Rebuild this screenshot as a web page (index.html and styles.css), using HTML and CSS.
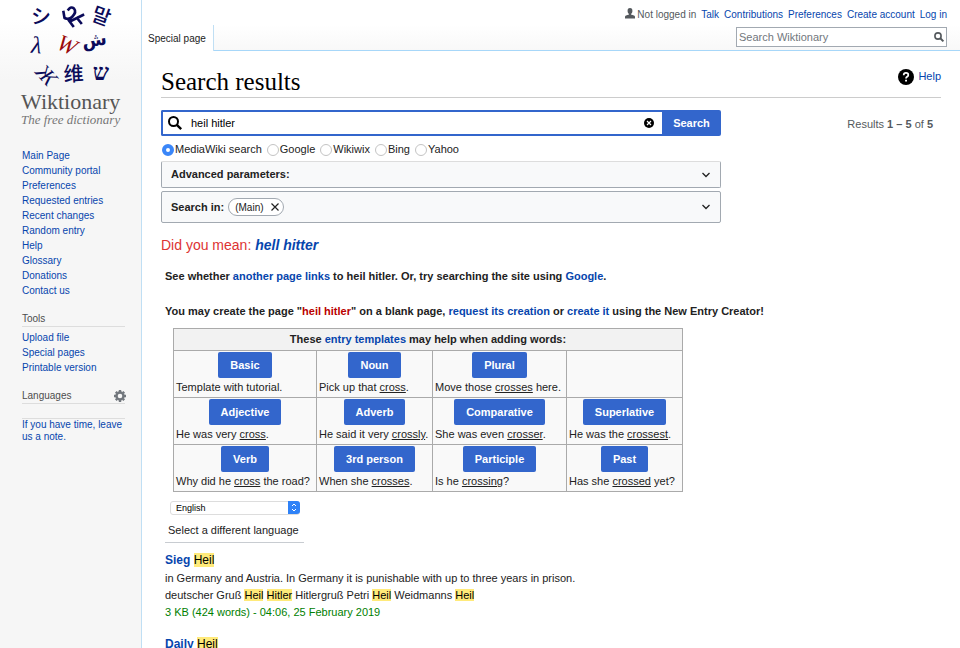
FILE: index.html
```html
<!DOCTYPE html>
<html lang="en">
<head>
<meta charset="utf-8">
<title>Search results - Wiktionary</title>
<link rel="stylesheet" href="styles.css">
</head>
<body>
<aside class="sidebar">
  <a class="logo" href="#" aria-label="Wiktionary">
    <svg viewBox="0 0 100 90" width="100" height="90" aria-hidden="true">
      <g fill="#0b0b5a" text-anchor="middle">
        <text class="cjk-jp" font-size="20" font-weight="500" transform="translate(20 23)">シ</text>
        <path d="M42.500 11L43.500 17Q48 19 51 16Q56 11 53 7.500Q50 5 47.500 8.500M51 16L47.500 19L52 25M50 20L62 14M56 17L60 22" fill="none" stroke="#0b0b5a" stroke-width="2.600" stroke-linecap="square" stroke-linejoin="round"/>
        <text class="cjk-kr" font-size="20" font-weight="500" transform="translate(78 22) rotate(20)">말</text>
        <text class="lambda" font-size="24" font-style="italic" transform="translate(15 52) rotate(4)">λ</text>
        <text class="arabic" font-size="18" font-weight="bold" transform="translate(74 45) rotate(-8)">ش</text>
        <text class="lambda" font-size="22" font-style="italic" transform="translate(20 79) rotate(48)">Ж</text>
        <text class="cjk-jp" font-size="20" font-weight="500" transform="translate(53 80) rotate(-3)">维</text>
        <text class="hebrew" font-size="23" font-weight="bold" transform="translate(80 79)">ש</text>
      </g>
      <text class="lambda" fill="#9b0b0b" text-anchor="middle" font-size="23" font-style="italic" transform="translate(43 51) rotate(24)">W</text>
    </svg>
    <span class="wordmark">Wiktionary</span>
    <span class="tagline">The free dictionary</span>
  </a>
  <nav class="side-nav">
    <a href="#">Main Page</a>
    <a href="#">Community portal</a>
    <a href="#">Preferences</a>
    <a href="#">Requested entries</a>
    <a href="#">Recent changes</a>
    <a href="#">Random entry</a>
    <a href="#">Help</a>
    <a href="#">Glossary</a>
    <a href="#">Donations</a>
    <a href="#">Contact us</a>
  </nav>
  <h3 class="side-title">Tools</h3>
  <nav class="side-nav tools">
    <a href="#">Upload file</a>
    <a href="#">Special pages</a>
    <a href="#">Printable version</a>
  </nav>
  <h3 class="side-title">Languages
    <button class="gear" aria-label="Language settings">
      <svg viewBox="0 0 12 12" width="12" height="12"><circle cx="6" cy="6" r="3.500" fill="none" stroke="#72777d" stroke-width="2.400"/><path d="M6 0v2M6 10v2M0 6h2M10 6h2M1.800 1.800l1.300 1.300M8.900 8.900l1.300 1.300M10.200 1.800L8.900 3.100M3.100 8.900l-1.300 1.300" stroke="#72777d" stroke-width="2.400"/></svg>
    </button>
  </h3>
  <p class="note"><a href="#">If you have time, leave us a note.</a></p>
</aside>

<div class="page">
  <header class="top">
    <a class="tab" href="#">Special page</a>
    <div class="top-right">
      <nav class="personal">
        <span class="anon"><svg viewBox="0 0 10 11" width="10" height="11" aria-hidden="true"><path d="M5 0C3.300 0 2.400 1.200 2.600 3.200C2.700 4.500 3.300 5.500 4 6V6.600L1 7.600Q0 8 0 9V10.500H10V9Q10 8 9 7.600L6 6.600V6C6.700 5.500 7.300 4.500 7.400 3.200C7.600 1.200 6.700 0 5 0Z" fill="#54595d"/></svg>Not logged in</span>
        <a href="#">Talk</a>
        <a href="#">Contributions</a>
        <a href="#">Preferences</a>
        <a href="#">Create account</a>
        <a href="#">Log in</a>
      </nav>
      <form class="site-search">
        <input type="search" aria-label="Search Wiktionary" placeholder="Search Wiktionary">
        <button type="button" aria-label="Go"><svg viewBox="0 0 10 10" width="10" height="10"><circle cx="4" cy="4" r="3.100" fill="none" stroke="#54595d" stroke-width="1.600"/><path d="M6.300 6.300L9.400 9.400" stroke="#54595d" stroke-width="2"/></svg></button>
      </form>
    </div>
  </header>

  <main class="content">
    <div class="heading">
      <h1>Search results</h1>
      <a class="help" href="#"><svg viewBox="0 0 16 16" width="16" height="16" aria-hidden="true"><circle cx="8" cy="8" r="8"/><path d="M5.700 6.200Q5.700 3.900 8 3.900Q10.300 3.900 10.300 5.900Q10.300 7 9.100 7.800Q8 8.500 8 9.600" fill="none" stroke="#fff" stroke-width="1.700"/><path d="M7.100 10.700h1.900v1.900H7.100z" fill="#fff"/></svg>Help</a>
    </div>

    <div class="search-row">
      <form class="search-form">
        <div class="field">
          <svg viewBox="0 0 14 14" width="14" height="14" aria-hidden="true"><circle cx="5.500" cy="5.500" r="4.500" fill="none" stroke="#000" stroke-width="2"/><path d="M8.800 8.800L13.200 13.200" stroke="#000" stroke-width="2.400"/></svg>
          <input type="text" aria-label="Search" value="heil hitler">
          <button class="clear" type="button" aria-label="Clear"><svg viewBox="0 0 10 10" width="10" height="10"><circle cx="5" cy="5" r="5"/><path d="M3 3l4 4M7 3L3 7" stroke="#fff" stroke-width="1.200"/></svg></button>
        </div>
        <button class="submit" type="button">Search</button>
      </form>
      <p class="count">Results <b>1 – 5</b> of <b>5</b></p>
    </div>

    <div class="engines">
      <label><input type="radio" name="engine" checked>MediaWiki search</label>
      <label><input type="radio" name="engine">Google</label>
      <label><input type="radio" name="engine">Wikiwix</label>
      <label><input type="radio" name="engine">Bing</label>
      <label><input type="radio" name="engine">Yahoo</label>
    </div>

    <div class="panel advanced"><b>Advanced parameters:</b>
      <button class="expand" aria-label="Expand advanced parameters"><svg viewBox="0 0 10 6" width="10" height="6"><path d="M1.500 1L5 4.500L8.500 1" fill="none" stroke="#222" stroke-width="1.300"/></svg></button>
    </div>
    <div class="panel namespaces"><b>Search in:</b>
      <span class="chip">(Main)<button aria-label="Remove (Main)"><svg viewBox="0 0 8 8" width="8" height="8"><path d="M.500 .500l7 7M7.500 .500l-7 7" stroke="#222" stroke-width="1.200"/></svg></button></span>
      <button class="expand" aria-label="Expand namespaces"><svg viewBox="0 0 10 6" width="10" height="6"><path d="M1.500 1L5 4.500L8.500 1" fill="none" stroke="#222" stroke-width="1.300"/></svg></button>
    </div>

    <p class="suggest">Did you mean: <a href="#">hell hitter</a></p>

    <div class="body">
      <p class="hint">See whether <a href="#">another page links</a> to heil hitler. Or, try searching the site using <a href="#">Google</a>.</p>
      <p class="hint create">You may create the page "<a class="new" href="#">heil hitler</a>" on a blank page, <a href="#">request its creation</a> or <a href="#">create it</a> using the New Entry Creator!</p>

      <table class="templates">
        <colgroup><col class="wide"><col class="narrow"><col class="medium"><col class="narrow"></colgroup>
        <thead><tr><th colspan="4">These <a href="#">entry templates</a> may help when adding words:</th></tr></thead>
        <tbody>
          <tr>
            <td><button>Basic</button><p>Template with tutorial.</p></td>
            <td><button>Noun</button><p>Pick up that <u>cross</u>.</p></td>
            <td><button>Plural</button><p>Move those <u>crosses</u> here.</p></td>
            <td></td>
          </tr>
          <tr>
            <td><button>Adjective</button><p>He was very <u>cross</u>.</p></td>
            <td><button>Adverb</button><p>He said it very <u>crossly</u>.</p></td>
            <td><button>Comparative</button><p>She was even <u>crosser</u>.</p></td>
            <td><button>Superlative</button><p>He was the <u>crossest</u>.</p></td>
          </tr>
          <tr>
            <td><button>Verb</button><p>Why did he <u>cross</u> the road?</p></td>
            <td><button>3rd person</button><p>When she <u>crosses</u>.</p></td>
            <td><button>Participle</button><p>Is he <u>crossing</u>?</p></td>
            <td><button>Past</button><p>Has she <u>crossed</u> yet?</p></td>
          </tr>
        </tbody>
      </table>

      <div class="language">
        <div class="select-wrap">
          <select id="lang"><option>English</option></select>
          <svg viewBox="0 0 12 13" width="12" height="13" aria-hidden="true"><path d="M0 0H9Q12 0 12 3V10Q12 13 9 13H0Z" fill="#2f82f7"/><path d="M4 5L6 3L8 5M4 8L6 10L8 8" fill="none" stroke="#fff"/></svg>
        </div>
        <label for="lang">Select a different language</label>
      </div>

      <article class="result">
        <h2><a href="#">Sieg</a> <mark>Heil</mark></h2>
        <p>in Germany and Austria. In Germany it is punishable with up to three years in prison.</p>
        <p>deutscher Gruß <mark>Heil</mark> <mark>Hitler</mark> Hitlergruß Petri <mark>Heil</mark> Weidmanns <mark>Heil</mark></p>
        <p class="meta">3 KB (424 words) - 04:06, 25 February 2019</p>
      </article>
      <article class="result">
        <h2><a href="#">Daily</a> <mark>Heil</mark></h2>
      </article>
    </div>
  </main>
</div>
</body>
</html>
```
FILE: styles.css
```css
* { box-sizing: border-box; }
html { background: #f6f6f6; scrollbar-width: none; }
body {
  margin: 0;
  min-height: 100vh;
  display: grid;
  grid-template-columns: 141px minmax(0, 1fr);
  font: 11px/17px "Liberation Sans", Arial, sans-serif;
  color: #222;
}
p, h1, h2, h3 { margin: 0; }
a { color: #0645ad; text-decoration: none; }
button, input, select { font: inherit; color: inherit; margin: 0; }
button { border: 0; padding: 0; background: none; }
svg { display: block; flex: none; overflow: visible; }

.sidebar {
  padding: 0 16px 0 22px;
  background: linear-gradient(#fff 20px, #f6f6f6 80px);
  font-size: 10px;
  line-height: 15px;
}
.logo { display: block; padding-top: 1px; text-align: center; margin: 0 5px 0 -1px; white-space: nowrap; }
.wordmark {
  display: block;
  font: 22px/22px "Liberation Serif", serif;
  color: #555;
}
.tagline { display: block; font: italic 13px/13px "Liberation Serif", serif; color: #777; }
.lambda { font-family: "Liberation Serif", serif; stroke: currentColor; stroke-width: 0; }
.cjk-jp { font-family: "Noto Sans CJK JP", sans-serif; }
.cjk-kr { font-family: "Noto Sans CJK KR", sans-serif; }
.arabic { font-family: "DejaVu Sans", sans-serif; }
.hebrew { font-family: "Liberation Serif", serif; }
.side-nav { display: flex; flex-direction: column; margin-top: 22px; }
.side-nav.tools { margin-top: 3px; }
.side-title {
  display: flex;
  justify-content: space-between;
  align-items: center;
  margin-top: 13px;
  border-bottom: 1px solid #ddd;
  font-size: 10px;
  font-weight: normal;
  color: #4d4d4d;
}
.gear { margin-right: -1px; }
.note { margin-top: 14px; border-top: 1px solid #ddd; line-height: 12px; }

.page { min-width: 0; background: #fff; border-left: 1px solid #c0dff4; }
.top {
  height: 51px;
  display: flex;
  justify-content: space-between;
  align-items: flex-end;
  border-bottom: 1px solid #a7d7f9;
  background: linear-gradient(#fff 50%, #f8f8f8);
  font-size: 10px;
}
.tab {
  height: 26px;
  padding: 7px 7px 0 6px;
  margin-bottom: -1px;
  line-height: 14px;
  color: #222;
  background: #fff;
  border-right: 1px solid #c0dff4;
}
.top-right { display: flex; flex-direction: column; align-items: flex-end; padding: 0 13px 3px 0; gap: 5px; }
.personal { display: flex; gap: 5px; line-height: 14px; white-space: nowrap; }
.anon { display: flex; gap: 2px; color: #54595d; }
.site-search {
  display: flex;
  align-items: center;
  width: 211px;
  height: 20px;
  border: 1px solid #a2a9b1;
  background: #fff;
  padding-right: 2px;
}
.site-search input { flex: 1; min-width: 0; border: 0; padding: 0 2px; font-size: 11px; background: none; outline: 0; }
.site-search input::placeholder { color: #72777d; opacity: 1; }

.content { padding: 14px 19px 0; }
.heading { display: flex; justify-content: space-between; align-items: flex-start; border-bottom: 1px solid #ccc; height: 33px; }
h1 { font: 25px/33px "Liberation Serif", serif; color: #000; }
.help { display: flex; align-items: center; gap: 4px; padding-top: 3px; }
.search-row { display: flex; justify-content: space-between; align-items: center; margin-top: 12px; padding-right: 8px; }
.search-form { display: flex; flex: 0 1 560px; height: 26px; }
.field {
  display: flex;
  flex: 1;
  align-items: center;
  gap: 9px;
  padding: 0 8px 0 5px;
  border: 2px solid #36c;
  border-right: 0;
  border-radius: 2px 0 0 2px;
}
.field input { flex: 1; min-width: 0; border: 0; padding: 0; color: #000; outline: 0; }
.submit { width: 59px; background: #36c; color: #fff; font-weight: bold; border-radius: 0 2px 2px 0; }
.count { color: #54595d; padding-top: 2px; }
.engines { display: flex; gap: 5px; margin: 5px 0 3px 1px; line-height: 17px; }
.engines label { display: flex; align-items: center; gap: 1px; }
.engines input {
  appearance: none;
  width: 12px;
  height: 12px;
  border: 1px solid #c4c4c4;
  border-radius: 50%;
  background: #fff;
}
.engines input:checked { border: 4px solid #3a86f8; }
.panel {
  display: flex;
  align-items: center;
  max-width: 560px;
  padding: 0 9px;
  gap: 4px;
  border: 1px solid #a2a9b1;
  border-radius: 2px;
  background: #f8f9fa;
}
.advanced { height: 27px; border-top-color: #ddd; }
.namespaces { height: 32px; margin-top: 3px; }
.expand { margin-left: auto; }
.chip {
  display: flex;
  align-items: center;
  gap: 7px;
  height: 18px;
  padding: 0 4px 0 6px;
  border: 1px solid #a2a9b1;
  border-radius: 9px;
  background: #fff;
  font-size: 10px;
}
.suggest { margin-top: 13px; font-size: 14px; line-height: 18px; color: #d33; }
.suggest a { font-weight: bold; font-style: italic; }
.body { padding: 14px 0 0 4px; }
.hint { font-weight: bold; }
.create { margin-top: 18px; }
.new { color: #ba0000; }

.templates { border-collapse: collapse; margin: 8px 0 0 8px; background: #f9f9f9; border: 1px solid #aaa; white-space: nowrap; }
.templates .wide { width: 143px; }
.templates .medium { width: 134px; }
.templates .narrow { width: 116px; }
.templates th, .templates td { border: 1px solid #aaa; padding: 1px 2px; }
.templates th { height: 22px; background: #f2f2f2; }
.templates td { text-align: center; }
.templates td p { text-align: left; line-height: 18px; }
.templates button {
  display: block;
  height: 26px;
  margin: 0 auto;
  padding: 0 12px;
  background: #36c;
  color: #fff;
  font-weight: bold;
  border-radius: 2px;
}
.language { width: max-content; margin-top: 9px; padding: 0 4px 3px 3px; border-bottom: 1px solid #c8ccd1; }
.select-wrap { display: grid; width: 130px; margin-left: 2px; }
.select-wrap > * { grid-area: 1 / 1; }
.select-wrap svg { justify-self: end; pointer-events: none; }
select {
  appearance: none;
  height: 14px;
  border: 1px solid #ddd;
  border-radius: 3px;
  background: #fff;
  padding: 0 5px;
  font-size: 9px;
  line-height: 12px;
  color: #000;
}
.language label { display: block; margin-top: 7px; }
.result { margin-top: 9px; padding-bottom: 6px; }
.result + .result { margin-top: 9px; }
h2 { font-size: 12px; line-height: 17px; font-weight: normal; margin-bottom: 1px; }
h2 a { font-weight: bold; }
mark { background: #ffea7a; color: #000; }
.meta { color: #008000; }
```
